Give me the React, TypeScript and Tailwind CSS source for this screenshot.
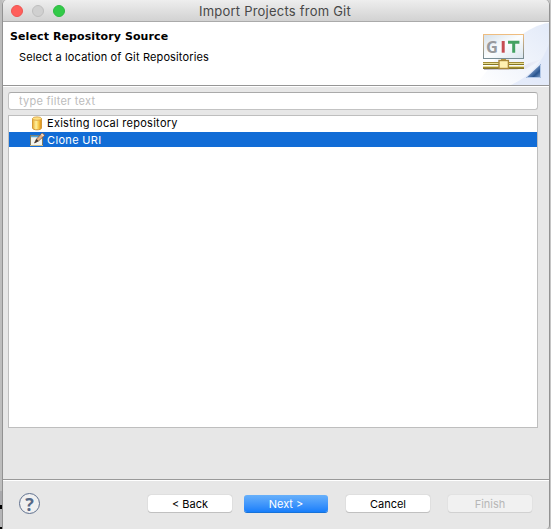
import React from 'react';

function GitBanner() {
  return (
    <svg width="74" height="63" viewBox="0 0 74 63" className="block shrink-0" aria-hidden="true">
      <defs>
        <linearGradient id="sky" x1="0" y1="1" x2="1" y2="0">
          <stop offset="0" stopColor="#ffffff" />
          <stop offset="1" stopColor="#d9e3f6" />
        </linearGradient>
        <linearGradient id="screen" x1="0" y1="0" x2="1" y2="1">
          <stop offset="0" stopColor="#d5e0e9" />
          <stop offset="0.5" stopColor="#fbfdfe" />
          <stop offset="1" stopColor="#dbe6ee" />
        </linearGradient>
        <linearGradient id="frame" x1="0" y1="0" x2="0" y2="1">
          <stop offset="0" stopColor="#efbd7f" />
          <stop offset="1" stopColor="#71878f" />
        </linearGradient>
        <linearGradient id="corner" x1="0" y1="0" x2="1" y2="1">
          <stop offset="0.3" stopColor="#9db8df" />
          <stop offset="0.7" stopColor="#28548f" />
          <stop offset="1" stopColor="#8eacd3" />
        </linearGradient>
        <linearGradient id="shade" x1="0" y1="0" x2="1" y2="0">
          <stop offset="0" stopColor="#b9b5c8" />
          <stop offset="1" stopColor="#e6e8f5" stopOpacity="0.3" />
        </linearGradient>
      </defs>
      <path d="M0 63C12 52 22 30 42 16C53 8 63 2 74 1V63Z" fill="url(#sky)" opacity="0.75" />
      <path d="M36 63C58 53 68 38 74 22V63Z" fill="#dde6f8" opacity="0.7" />
      <path d="M9 47H51L67 37L54 41L42 48H9Z" fill="url(#shade)" />
      <rect x="8.5" y="12.5" width="40" height="24" fill="url(#screen)" stroke="url(#frame)" />
      <path d="M8 36.5H49" stroke="#788d95" />
      <text x="11" y="30.5" fontFamily="Open Sans, sans-serif" fontSize="16" fontWeight="700" fill="#989a9d" textLength="12" lengthAdjust="spacingAndGlyphs">G</text>
      <path d="M28.2 19V30.7" stroke="#c64d52" strokeWidth="3" />
      <path d="M33 20.3H44.4M38.7 20V30.7" stroke="#45a262" strokeWidth="3" />
      <path d="M8 40.5H49M8 45.5H49" stroke="#a28c35" />
      <path d="M8 41.5H49M8 44.5H49" stroke="#e9df91" />
      <path d="M8 42.5H49M8 46.5H49" stroke="#837629" />
      <path d="M26 37H31V39H26Z" fill="#b69a42" />
      <rect x="24" y="38.5" width="9.4" height="8" fill="#fff0b2" stroke="#aa883a" strokeWidth="1.4" />
      <path d="M51 56L66 42V56Z" fill="url(#corner)" />
      <path d="M52 55.5H65.5V43" stroke="#b3c8e7" fill="none" />
    </svg>
  );
}

function Database() {
  return (
    <svg width="17" height="16" viewBox="0 0 17 16" className="block shrink-0" aria-hidden="true">
      <defs>
        <linearGradient id="gold">
          <stop offset="0" stopColor="#e9a82a" />
          <stop offset="0.4" stopColor="#fff2a1" />
          <stop offset="0.65" stopColor="#f9cd50" />
          <stop offset="1" stopColor="#d98712" />
        </linearGradient>
      </defs>
      <path d="M3.5 2.5V12C3.5 14.4 12.5 14.4 12.5 12V2.5" fill="url(#gold)" stroke="#d39a3a" />
      <ellipse cx="8" cy="2.6" rx="4.5" ry="1.7" fill="#ffe282" stroke="#dba94d" />
    </svg>
  );
}

function ClonePencil() {
  return (
    <svg width="17" height="15" viewBox="0 0 17 15" className="block shrink-0" aria-hidden="true">
      <rect x="1.5" y="3.5" width="12" height="10" fill="#f3f4ed" stroke="#80785e" />
      <path d="M2 4.5H13" stroke="#52a5d7" strokeWidth="1.5" />
      <path d="M1 13.5H14" stroke="#c9b98a" />
      <path d="M5.5 11L7.5 7L13.2 1L15.8 3.2L9.5 9Z" fill="#e6b184" stroke="#765746" strokeWidth="0.8" />
      <path d="M5.5 11L7.5 7L9.5 9Z" fill="#36332c" />
      <path d="M12.5 2L14.5 4" stroke="#f4dfcb" strokeWidth="1.4" />
    </svg>
  );
}

const button = "flex h-[17px] w-[84px] items-center justify-center rounded-[3px] pt-[2px] font-['Inter',sans-serif] text-[11px] leading-[15px]";

export default function App() {
  return (
    <div className="flex h-[529px] w-[551px] overflow-hidden bg-[#c5c5c5] font-['Inter',sans-serif] text-black">
      <div className="flex w-[2px] shrink-0 flex-col bg-[#bdbdbd]">
        <div className="h-[491px]" />
        <div className="h-[14px] bg-[#a9a9ac]" />
        <div className="h-[4px] bg-black" />
        <div className="h-[18px] bg-[#b5b5b7]" />
        <div className="h-[2px] bg-black" />
      </div>
      <main className="flex h-[529px] w-[548px] shrink-0 flex-col overflow-hidden rounded-t-[5px] rounded-br-[4px] border-x border-[#929292] bg-[#e7e7e7]">
        <header className="flex h-[22px] shrink-0 items-center border-b border-[#aaa] bg-linear-to-b from-[#eeeeee] to-[#d2d2d2]">
          <div className="ml-[8px] flex w-[188px] shrink-0 gap-[9px]">
            <span className="size-[12px] rounded-full border border-[#ed5552] bg-[#ff5f5b]" />
            <span className="size-[12px] rounded-full border border-[#bebebe] bg-[#d0d0d0]" />
            <span className="size-[12px] rounded-full border border-[#2dba42] bg-[#32ca48]" />
          </div>
          <h1 className="whitespace-nowrap pt-px text-[13px] leading-[20px] tracking-[0.22px] text-[#484848]">Import Projects from Git</h1>
        </header>
        <section className="flex h-[63px] shrink-0 justify-between bg-white">
          <div className="pl-[7px] pt-[7px] whitespace-nowrap">
            <h2 className="font-['DejaVu_Sans',sans-serif] text-[11px] font-bold leading-[16px] tracking-[0.1px]">Select Repository Source</h2>
            <p className="pl-[9px] pt-[5px] text-[11px] leading-[15px] tracking-[0.14px]">Select a location of Git Repositories</p>
          </div>
          <GitBanner />
        </section>
        <div className="h-[2px] shrink-0 border-b border-white bg-[#969696]" />
        <section className="flex h-[392px] shrink-0 flex-col pl-[5px] pr-[11px] pt-[5px]">
          <input className="block h-[18px] w-full rounded-[3px] border border-[#c3c3c3] border-t-[#aaa] bg-white px-[10px] text-[11px] leading-[14px] tracking-[0.24px] outline-none placeholder:text-[#bcbcbc]" placeholder="type filter text" aria-label="Filter repositories" />
          <div className="mt-[5px] h-[313px] border border-[#bebebe] bg-white">
            <div className="flex h-[16px] items-center gap-[1px] pl-[20px] text-[11px] leading-[15px] tracking-[0.27px]"><Database /><span className="pb-px">Existing local repository</span></div>
            <div className="flex h-[15px] items-center gap-[1px] bg-[#116cd6] pl-[20px] text-[11px] leading-[15px] tracking-[0.34px] text-white"><ClonePencil /><span className="pt-px">Clone URI</span></div>
          </div>
        </section>
        <footer className="flex h-[50px] shrink-0 items-start border-t border-[#999] pt-[15px] shadow-[inset_0_1px_0_white]">
          <div className="ml-[16px] mr-[108px] -mt-[2px] flex size-[21px] shrink-0 items-center justify-center rounded-full border border-[#60718f] bg-[#f0f0f0] font-['Open_Sans',sans-serif] text-[18px] font-bold leading-none text-[#566987]">?</div>
          <div className="flex gap-x-[12px] whitespace-nowrap">
            <button className={`${button} bg-white shadow-[0_0_1px_#999,0_1px_0_#c5c5c5]`}>&lt; Back</button>
            <button className={`${button} bg-linear-to-b from-[#67b0fa] to-[#157efb] text-white shadow-[0_1px_0_#1672d8]`}>Next &gt;</button>
            <button className={`${button} ml-[6px] bg-white shadow-[0_0_1px_#999,0_1px_0_#c5c5c5]`}>Cancel</button>
            <button className={`${button} ml-[6px] bg-[#f1f1f1] text-[#b7b7b7] shadow-[0_0_1px_#bbb,0_1px_0_#d4d4d4]`} disabled>Finish</button>
          </div>
        </footer>
      </main>
    </div>
  );
}
